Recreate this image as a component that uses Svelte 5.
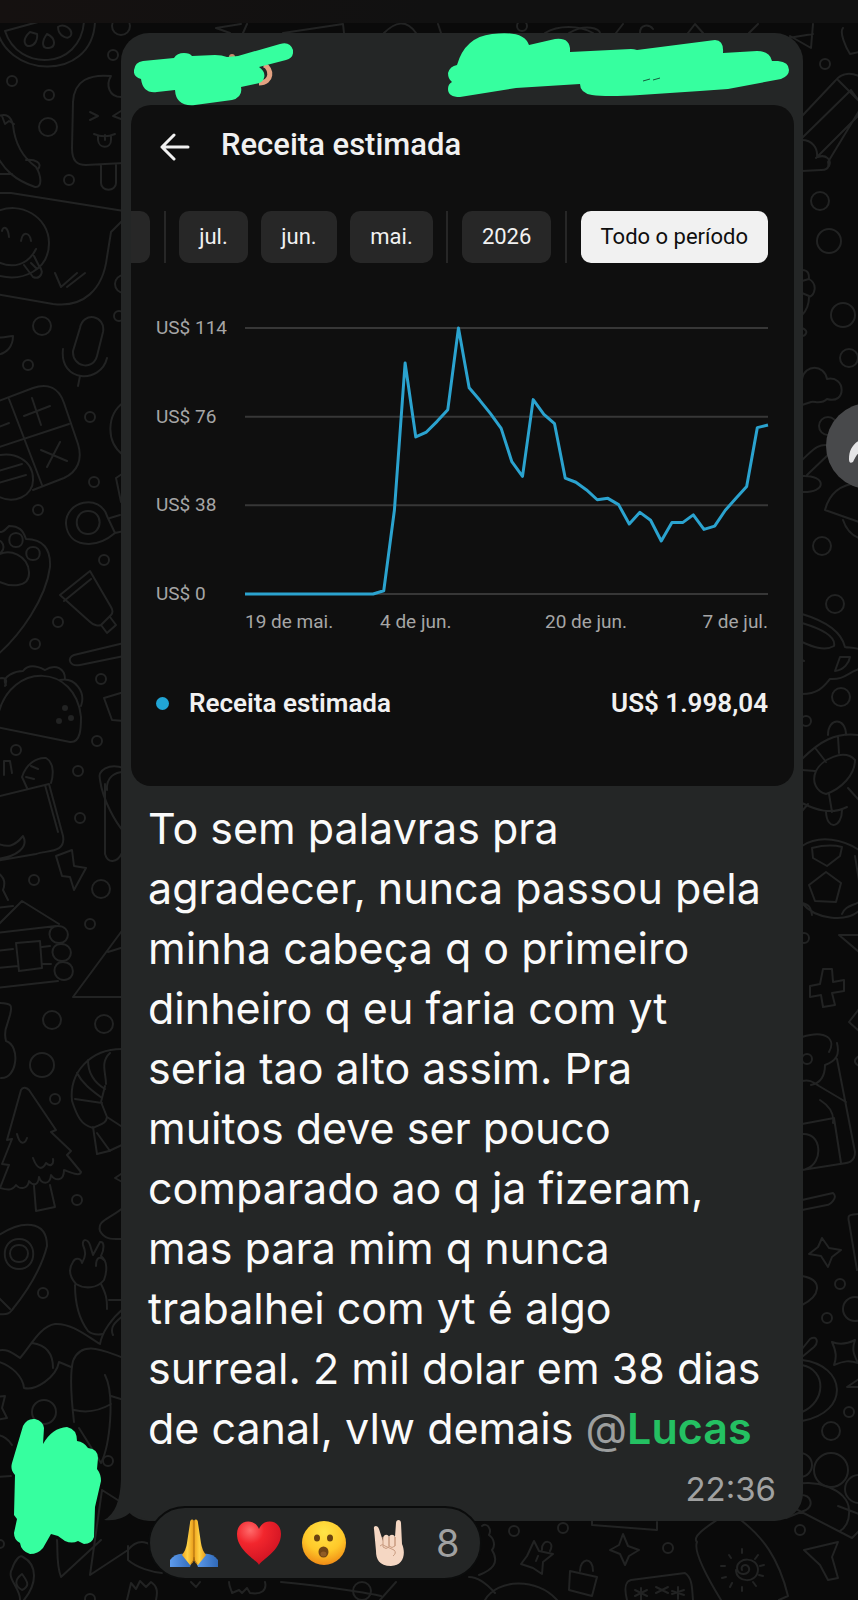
<script lang="ts">
  const periods = ['jul.', 'jun.', 'mai.'];
  let selected = $state('Todo o período');

  // daily revenue in US$, 19 May to 7 July
  const revenue = [
    0, 0, 0, 0, 0, 0, 0, 0, 0, 0, 0, 0, 0, 1.4, 36, 99, 67.3, 69.4, 74, 79,
    114, 88.4, 83, 77.3, 71, 56.7, 50.4, 83.3, 77, 73, 49.7, 47.9, 44.6, 40.4,
    41, 38.3, 30, 35, 31.6, 22.7, 30.6, 30.6, 33.9, 27.7, 29.1, 35.9, 41, 46.1,
    71.3, 72.4,
  ];
  const line = revenue.map((v, i) => `${i},${114 - v}`).join(' ');
  const yLabels = [114, 76, 38, 0];
  const xLabels = ['19 de mai.', '4 de jun.', '20 de jun.', '7 de jul.'];

  // wallpaper bubbles: x, y, radius
  const dots = [
    [121, 26, 9], [113, 55, 5], [12, 81, 5], [49, 95, 5], [48, 127, 9], [69, 180, 5],
    [42, 326, 9], [28, 365, 5], [90, 417, 5], [94, 482, 5], [119, 316, 5], [124, 284, 9],
    [38, 510, 5], [104, 560, 5], [58, 622, 5], [35, 644, 5], [101, 679, 5], [97, 741, 5],
    [16, 750, 5], [78, 771, 5], [80, 818, 5], [34, 880, 5], [101, 889, 9], [90, 924, 5],
    [52, 1020, 9], [104, 1024, 9], [42, 1065, 12], [55, 1099, 5], [77, 1200, 5],
    [43, 1293, 5], [44, 1412, 12], [108, 1461, 5], [0, 1544, 4], [90, 1599, 5],
    [522, 26, 5], [825, 64, 5], [820, 201, 9], [829, 241, 12], [843, 315, 12], [849, 358, 9],
    [828, 426, 9], [822, 546, 9], [835, 604, 9], [841, 697, 9], [806, 721, 5],
    [804, 938, 5], [807, 1059, 5], [840, 1284, 5], [827, 1318, 5], [855, 1309, 12],
    [849, 1412, 5], [831, 1431, 9], [800, 1465, 12], [831, 1470, 17], [859, 1489, 14],
    [800, 1530, 5], [514, 1531, 5], [563, 1528, 5], [668, 1548, 5], [362, 1591, 9],
  ];

  const doodles = [
    // watermelon
    'M-4 24C2 78 92 84 95 22M5 31C18 72 80 70 84 22M5 31 38 22M30 32c-9 8-5 15 0 14s8-6 7-12zM47 34c-6 8-5 15 2 14s7-10-2-14M58 27c0 9 11 14 13 8s-7-12-13-8',
    // ice lolly
    'M123 97C108 98 106 84 111 76 90 74 74 80 73 102L72 148c0 13 5 17 14 17l38-2M101 165v18c0 9 15 9 15 0v-18M90 112l8 4-8 4M121 111l-8 5 8 3M94 134c7 3 14 3 21 0M98 136v4c1 9 13 9 13 0v-4M105 135v5',
    // pepper
    'M-4 117c11-5 15 0 17 8C15 145 25 159 36 167c5 8 7 21-1 20C15 180 4 170-4 154M-4 174h16M26 160c9-1 17 3 12 9M2 116l3 8 4-3 5 3',
    // envelope with face
    'M-4 193h15L124 211M-4 294 53 304c30 4 50-14 54-47l4-25 13-13M2 231c1-5 6-5 7 6M21 241c2-11 9-8 10 0M55 273l6 14 16-14M67 287l18-14',
    'M-4 212C20 200 49 217 49 243S24 283-4 275M-2 262c15 7 30 3 38-13M24 265l9 12c7 3 12-5 6-11l-5-10M31 263l5 5',
    // microphone
    'M80 328c3-17 26-13 23 4l-6 24c-4 15-25 11-24-5zM63 349c-4 34 38 35 44 9M80 376l-2 10M-4 337c8 2 11-1 17-1 0 10-6 18-17 19',
    // calculator
    'M-4 402 33 388c15-5 26 0 31 15l14 41c5 16-1 28-14 34l-31 12M9 399l33 86M-4 448l73-24M24 416l26-10M32 398l9 27M41 450l26 11M60 442l-13 25M-4 428l13-5M-2 471l24-7M-2 483l28-8',
    'M-4 456c18-5 37 4 37 23 1 17-20 27-37 16M124 402c-18 13-18 40-1 53M122 474l-6 4 5 24',
    // paw
    'M-4 530c5 5 9 0 13-4 10 0 14 4 17 13 17 0 25 10 24 28C46 598 21 635-4 656M16 533c9 0 9 14 0 14s-9-14 0-14M33 547c9 0 9 13 0 13s-9-13 0-13M-4 556c14-9 32 0 33 16S10 588-4 580M-4 540c10 0 10 14 0 14',
    // whistle and tube
    'M115 533c-20 17-47 14-49-9-1-23 34-31 41-8zM88 511c16 0 15 23 0 23s-15-23 0-23M110 518l10-3M115 533l9-2M90 571l-30 24 29 26c5 5 10 5 12 4l10-10c3-3 1-6 0-8zM91 579l-27 22M101 625l6 8 9-8-6-8',
    'M124 643 74 655c-8 3-4 12 6 10l44-9',
    // taco
    'M-4 727 70 742c11 1 11-15 11-25C76 664 11 661-2 715M6 685c-6-9 11-14 17-14 7-9 18-3 22-1 11-7 20-1 20 9M60 680c15-3 26 12 21 26M-4 679l6-1c7 0 3 7 3 8M124 692l-20 6 8 22 12 1',
    // grocery bag
    'M-4 797 49 784l14 52c3 17-15 14-27 18l-40 7M45 785l13 47M27 788l-5-11c4-13 15-20 24-19 9 5 7 19 5 25M31 766l7 3M26 777l8 2M-4 843c12 5 18 4 27-7 6 11-6 21-27 23M4 775v-14h6l2 12',
    // surfboard and bolt
    'M124 768c-15-5-27 2-24 12 3 21 16 43 24 52M105 784v70c3 10 12 9 17-1M107 790c-1-13 8-18 17-18M56 856l16-6 2 16 12 2-12 22-4-13-8-1z',
    // log cabin
    'M-4 927 22 901 59 924M13 906-4 908M-4 933 56 926M-4 951l17-2M42 947l8-1M-4 968l22-2M42 964h9M-4 988l62-7M16 943l24-2 2 27-23 3zM58 926c13 0 13 17 1 17s-13-17-1-17M61 944c13 0 13 17 1 17s-13-17-1-17M63 962c13 0 13 18 1 18s-13-18-1-18M-4 872c8 4 10 10 7 18l5 10',
    'M124 928 73 997h52M108 952l16-5M-4 1003c18 0 16 3 14 12l-3 10c-3 7-2 12-1 16 15 5 11 38-5 37',
    // christmas tree
    'M21 1090c2-4 6-2 8 0L56 1130l-5 2 20 19-4 4 14 17c-1 5-11 0-17-2 0 12-9 11-13 5-1 11-10 9-12 2-1 9-6 9-10 4-1 8-9 9-13 4-4 6-9 5-16 3l9-23-7-1 10-25-5 1zM34 1186l2 25 19-4-5-22M17 1134c3 12 8 10 10 4M33 1158c4 11 9 13 13 5 4 4 8 2 7-4',
    // shrimp
    'M124 1049c-34-1-55 24-52 52 5 15 9 24 21 27 8-4 13-4 14-11l-6-15 4-16M88 1060c0 14 7 23 17 29M77 1073c5 10 14 17 25 25M75 1099l27 4M110 1053c-10 9-4 20-4 31M93 1127l4 27 12-3 15-7M107 1117l17 11M97 1133l13 18M124 1172l-9 6 9 5M124 1207c-14 12-27 13-24 24 5 9 12 8 24 8',
    // map pin
    'M-4 1237c26-18 51-17 51 9-5 20-18 43-35 64-4 6-9 3-16 5M-4 1295l14 14M19 1239c19 0 19 30 0 30s-19-30 0-30M19 1245c12 0 12 17 0 17s-12-17 0-17',
    // hand
    'M76 1284c-6-7-8-15-3-22 2-5 8-4 9 1 4-7 4-11 1-18-1-7 5-6 7 0l3 10 7-13c5-1 4 8 1 14 7 5 6 16 3 24-7 9-20 9-28 4M75 1285c0 19 4 34 13 46 5 4 10 4 15 3M101 1284c5 10 6 14 6 25M96 1266c0-9 4-10 8-6',
    'M-4 1351c11-3 15 1 24 7 10-11 20-32 35-34 17-1 33 13 45 20 2-12 12-26 24-36M-4 1361c16 4 27 16 28 27 11 3 32-10 35-26l12 5M32 1343c15 2 21 11 21 25M74 1422c-2-17-5-45-1-61 9-23 35-8 51-3M105 1375c10 20 5 70-4 88l-22-35M74 1410c12 3 25 1 37-6M111 1396l13 4M113 1335c-4-9 4-14 11-20M109 1300h15',
    'M-4 1397l9-1-3 12 5 10-11 2M-4 1435c7 0 13 5 16 10M-4 1477l15-1M102 1490 90 1575l38-25c12-15 24-5 32 0M102 1490l22 14M57 1540c1 10-1 24 4 37l40-37M128 1546v14c9 8 24 12 34 13M20 1600c1-11-14-22-8-31 3-9 8-15 11-12 15 8 14 27 1 43M22 1574c-8 6-7 12 0 16 8-4 6-8 0-16M127 1600l4-17 5 6 4-8 6 6 5-5c6 4 7 9 5 18',
    // shapes along the top
    'M216 28l14 5M216 28l25-4M247 24l-4 9M283 33l60-9 1 9M384 33c11-11 22-14 32 0M438 24l3 9M545 33c13-8 34-8 48 0M569 33c17-10 31-4 31 0M616 33l7-9M640 33c0-9 9-9 13-4M688 33l7-9 8 9M749 33l9-9M788 38l25-4M813 24l-2 24-21-12M843 28c-4 4 3 20 7 26l9-2',
    // pencil
    'M802 116 835 81c7-9 17-8 24-5M802 138l49-48 8 11M838 80l21 21M859 111l-31 51c2 7-3 8-7 8l-19 1M802 140c10 0 16 8 15 17M816 158l43-43M818 157c8-3 14 3 11 9M802 270c7 0 7 5 7 9 9 5 6 16 0 18 0 9-3 14-7 18M802 281l7-2M802 293l7 3M802 328c8 3 3 8 0 8',
    // cloud and shoes
    'M802 379c3-15 22-15 25 0 19-4 20 26 0 20-6 6-12 2-16 3l-9 3M802 460c10-9 16-18 29-14M807 475l24-23M802 476c25-1 25 17 0 16M825 510c5-19 18-26 34-27M825 510l34 12M843 520c3 9 8 15 16 18',
    // kettle
    'M802 614c20 6 39 16 43 33 3 1 7 0 14 2M802 623c20 6 34 14 32 23-10 6-23 0-32-4M802 694c17 0 22-8 28-15 14 1 17-6 29-10M840 657h10c-1 6-6 13-15 14zM802 660l2 1',
    // turtle
    'M802 759c17-17 33-27 57-24M802 770l13 1M816 749l10 13M838 737l1 16M848 788l11 12M829 794l3 18M802 803c14 7 29 12 45 4M816 771c5-11 28-23 39-11 0 15-14 29-29 34-9-2-15-12-10-23M828 735c0-18 18-18 18 0M826 812c1 19 16 16 16-2M802 811l6-7',
    // football
    'M802 846c18-12 42-6 57 4M802 903c13 16 43 20 57 8M812 848c12-3 22-3 30-1l-2 9-13 10-14-8zM826 872l15 11-5 19-21-1-6-16zM802 903c9 2 9 7 10 12M842 914c3-8 10-8 17-12M859 935h-20l20 17M855 856l4 25',
    // plus, cottage
    'M823 969h9l1 13 11-2v11l-12 2 3 12-12 2-2-12-11 2v-11l10-2zM859 1009l-10 13 10 9M802 1037c25-8 34 3 27 15M837 1043c3 12-1 18-12 22 0 10-4 18-14 20M802 1081c7-2 11 1 17 5l27 16M837 1059l18 93c0 11-8 11-15 12l-38 6M802 1124l32-6 7 45M820 1100c11 7 14 16 13 23M802 1134c20-2 22 29 4 35M859 1056c-8 5-2 9 0 10M802 1200l31-7c6 5-4 12-6 12l-25 5M859 1214c-9 1-12 0-10 8l8 48',
    // sparkles
    'M822 1238l7 10 12 2-9 7-4 10-7-11-12-2 9-7zM832 1342c8 3 15 2 23-2-3 9-2 13 3 23-9-3-14-2-24 2 3-8 2-14-2-23M802 1276c22 4 18 20 0 29M802 1349l8-10c7-4 9 3 4 8l-12 10M802 1365c25 5 24 37 0 47M802 1360c44 5 49 52 0 61M859 1379l-12 8h12',
    // corner shapes
    'M791 1486c21-9 58 3 58 24 1 11-4 18-9 21M790 1506l62 32 7-7M838 1506l21 8M791 1493c4-6 11-4 10 2 10 0 13 10 5 15l-20 8-4-24c2-6 8-6 9-1M804 1550l34-8-6 15 6 21-10 2-8-15zM592 1521v4l65 5v-8M697 1542c-7-7 20-21 28-28M697 1542c-4 9 10 35 24 58M738 1518c25 18 41 41 50 78l-9 4',
    'M623 1534l5 12 11 4-10 6-4 9-5-11-10-4 9-5zM534 1541l5 10 14 3-10 8-1 12-9-6-12-4 6-8zM542 1550c-1-12 14-10 8 1M536 1561l2-5M570 1571l27 6-5 19-23-6zM580 1571c0-13 13-15 13 0M627 1600c-4-16 0-19 4-20l54-7c8 5 7 18 8 27M635 1590l12 6M647 1590l-12 6M641 1588v12M656 1587l12 6M668 1587l-12 6M672 1591l12 4M684 1590l-12 4M678 1587v12',
    'M482 1526c5-4 10 3 7 9 6 4 6 12 3 15 8 13 0 20-13 25M469 1577c8 0 18 7 26 16M485 1600c12-21 52-23 72 0M281 1582c45 4 92 12 100 14M380 1600l16-18M229 1582c0 5 3 9 3 11l7-3 3 3 5-5 3 5c12 2 17-3 15-11M191 1582l5 5 4-5',
    // sun
    'M742 1570c-2-5 5-7 7-2 2 7-12 9-12 0 0-11 21-12 21 2-1 14-22 13-22 0M742 1549v4M758 1555l-3 4M764 1565l-4 1M763 1576l-4-1M756 1586l-3-4M742 1591v-4M730 1587l2-4M722 1578l4-1M721 1566h4M729 1555l2 3',
  ];
</script>

<main class="chat">
  <svg class="wallpaper" viewBox="0 0 858 1600" preserveAspectRatio="xMidYMin slice" aria-hidden="true">
    {#each dots as [cx, cy, r]}
      <circle {cx} {cy} {r} />
    {/each}
    {#each doodles as d}
      <path {d} />
    {/each}
    <g class="freckles">
      <circle cx="65" cy="708" r="3" />
      <circle cx="71" cy="718" r="3" />
      <circle cx="59" cy="721" r="3" />
    </g>
  </svg>

  <div class="topbar"></div>

  <article class="bubble">
    <header class="sender">
      <svg width="159" height="64" viewBox="134 43 159 64" aria-hidden="true">
        <path d="M264 65C272 68 273 83 259 83" fill="none" stroke="#e3a282" stroke-width="5" />
        <circle cx="232" cy="57" r="3" fill="#c98b6b" />
        <path class="marker" d="M143 61 174 58Q177 53 184 53 190 53 192 56L215 55Q222 55 227 57L238 56 280 44Q290 41 293 50 294 58 286 60L259 67Q266 72 264 78 263 83 255 84L241 87Q243 97 232 100L195 105Q176 107 175 90L157 92Q143 94 141 79 133 77 134 70 135 62 143 61Z" />
      </svg>
      <svg width="341" height="66" viewBox="448 33 341 66" aria-hidden="true">
        <path class="marker" d="M457 65Q465 37 492 34 524 30 529 45L555 39Q571 37 570 52L631 49Q634 49 637 50L715 40Q724 40 723 53L757 51Q770 51 772 61L778 61Q789 62 789 70 789 76 781 79L728 89 700 91 640 95Q606 97 592 95 580 93 580 84L516 88 460 97Q448 97 448 89 448 84 452 82 448 79 448 73 450 66 457 65Z" />
        <path d="M643 81l7-2M653 80l7-2" fill="none" stroke="#155c3b" />
      </svg>
    </header>

    <section class="card">
      <div class="card-head">
        <button class="back" aria-label="Voltar">
          <svg width="32" height="28" viewBox="0 0 32 28" fill="none" stroke="#f1f1f1" stroke-width="3" stroke-linecap="round" stroke-linejoin="round">
            <path d="M29 14H3M15 2 3 14l12 12" />
          </svg>
        </button>
        <h1>Receita estimada</h1>
      </div>

      <div class="chips">
        <button class="chip cut" aria-label="ago."></button>
        <span class="divider"></span>
        {#each periods as period}
          <button class="chip" class:active={selected === period} onclick={() => (selected = period)}>{period}</button>
        {/each}
        <span class="divider"></span>
        <button class="chip" class:active={selected === '2026'} onclick={() => (selected = '2026')}>2026</button>
        <span class="divider"></span>
        <button class="chip" class:active={selected === 'Todo o período'} onclick={() => (selected = 'Todo o período')}>Todo o período</button>
      </div>

      <div class="chart">
        <div class="y-axis">
          {#each yLabels as label}
            <span>US$ {label}</span>
          {/each}
        </div>
        <div class="plot">
          <svg viewBox="0 0 49 114" preserveAspectRatio="none" role="img" aria-label="Receita estimada por dia">
            {#each yLabels as label}
              <path class="grid" d="M0 {114 - label}H49" />
            {/each}
            <polyline points={line} />
          </svg>
          <div class="x-axis">
            {#each xLabels as label}
              <span>{label}</span>
            {/each}
          </div>
        </div>
      </div>

      <div class="total">
        <span class="dot"></span>
        <span>Receita estimada</span>
        <span class="amount">US$ 1.998,04</span>
      </div>
    </section>

    <p class="message">
      To sem palavras pra<br />
      agradecer, nunca passou pela<br />
      minha cabeça q o primeiro<br />
      dinheiro q eu faria com yt<br />
      seria tao alto assim. Pra<br />
      muitos deve ser pouco<br />
      comparado ao q ja fizeram,<br />
      mas para mim q nunca<br />
      trabalhei com yt é algo<br />
      surreal. 2 mil dolar em 38 dias<br />
      de canal, vlw demais <a href="#lucas"><span class="at">@</span>Lucas</a>
    </p>
    <time>22:36</time>

    <svg class="tail" width="50" height="42" viewBox="0 0 50 42" aria-hidden="true">
      <path d="M17 0Q16 33 0 41 16 43 27 33 36 40 50 42V0Z" fill="#242626" />
    </svg>

    <svg class="avatar" width="91" height="136" viewBox="11 1418 91 136" aria-hidden="true">
      <path class="marker" d="M23 1426Q27 1418 35 1419 43 1421 44 1428L43 1444Q52 1428 67 1427 77 1429 77 1441 84 1442 88 1448 98 1449 98 1458L97 1469Q101 1474 101 1481L95 1507 94 1537Q92 1544 84 1544L78 1541Q72 1544 65 1541L58 1536 51 1534 43 1548Q38 1554 30 1554 21 1551 20 1543 14 1540 14 1533L17 1519 14 1515 15 1475Q10 1470 12 1463Z" />
    </svg>

    <button class="reactions" aria-label="8 reações">
      <svg viewBox="0 0 48 48">
        <defs>
          <linearGradient id="hands" x1="0" x2="1">
            <stop offset="0" stop-color="#f0a41c" />
            <stop offset=".45" stop-color="#ffd246" />
            <stop offset="1" stop-color="#e89a17" />
          </linearGradient>
          <linearGradient id="sleeve" x1="0" x2="1">
            <stop offset="0" stop-color="#5d9bec" />
            <stop offset="1" stop-color="#3069b8" />
          </linearGradient>
        </defs>
        <path d="M0 48V41C4 36 9 34 14 35L22 43 20 48Z" fill="url(#sleeve)" />
        <path d="M48 48V41C44 36 39 34 34 35L26 43 28 48Z" fill="url(#sleeve)" />
        <path d="M24 2C22-1 20 1 20 4L17 24Q16 31 12 36L20 46Q24 44 24 38Z" fill="url(#hands)" />
        <path d="M24 2C26-1 28 1 28 4L31 24Q32 31 36 36L28 46Q24 44 24 38Z" fill="url(#hands)" />
        <path d="M24 2v36q0 4-3 7M24 38q0 4 3 7" fill="none" stroke="#a86a10" />
      </svg>
      <svg viewBox="-2 0 48 48">
        <defs>
          <radialGradient id="heart" cx=".3" cy=".2" r=".9">
            <stop offset="0" stop-color="#ff6b6b" />
            <stop offset=".35" stop-color="#f2262d" />
            <stop offset="1" stop-color="#c90f20" />
          </radialGradient>
        </defs>
        <path d="M22 46C20 41 0 32 0 15 0 0 18-1 22 10 26-1 44 0 44 15 44 32 24 41 22 46Z" fill="url(#heart)" />
      </svg>
      <svg viewBox="-2 0 48 48">
        <defs>
          <radialGradient id="face" cx=".5" cy=".25" r=".75">
            <stop offset="0" stop-color="#ffe447" />
            <stop offset=".6" stop-color="#ffc829" />
            <stop offset="1" stop-color="#f08c16" />
          </radialGradient>
        </defs>
        <circle cx="22" cy="24" r="22" fill="url(#face)" />
        <ellipse cx="15" cy="19" rx="3" ry="3.5" fill="#6b4310" />
        <ellipse cx="28" cy="19" rx="3" ry="3.5" fill="#6b4310" />
        <ellipse cx="21.500" cy="33" rx="5" ry="5.500" fill="#714515" />
        <ellipse cx="21.500" cy="35" rx="3" ry="2.500" fill="#915c25" />
      </svg>
      <svg viewBox="-8 0 48 48">
        <path d="M1 10C0 6 5 6 6 10L10 22V19C11 15 15 15 16 18 17 15 21 15 22 18L23 4C23 0 28 0 28 4L29 25C33 34 31 47 18 47 6 47 3 40 3 32Z" fill="#f5d7c3" />
        <path d="M10 18v10q3 3 6 0V18M16 18v9q3 3 6 0v-9M22 18v9M7 27q2-3 5 0l9 4q3 3-1 6" fill="none" stroke="#c99b80" stroke-width="1" />
      </svg>
      <span>8</span>
    </button>
  </article>

  <button class="forward" aria-label="Encaminhar">
    <svg width="44" height="36" viewBox="0 0 44 36">
      <path d="M6 34C3 36 2 34 2 31 2 20 8 12 22 9V1L43 17 22 33V22C13 22 10 25 6 34Z" fill="#e4e4e6" />
    </svg>
  </button>
</main>

<style>
  :global(body) {
    margin: 0;
    background: #0a0a0a;
  }

  .chat {
    position: relative;
    min-height: 100vh;
    box-sizing: border-box;
    padding-bottom: 78px;
    overflow: hidden;
    background: #0a0a0a;
    color: #fafafa;
    font-family: Inter, 'Liberation Sans', sans-serif;
  }

  .wallpaper {
    position: absolute;
    inset: 0;
    width: 100%;
    height: 100%;
    fill: none;
    stroke: #222323;
    stroke-width: 2;
    stroke-linejoin: round;
    stroke-linecap: round;
  }

  .freckles {
    fill: #222323;
    stroke: none;
  }

  .topbar {
    position: relative;
    height: 23px;
    background: linear-gradient(90deg, #151110, #111 50%);
  }

  .bubble {
    position: relative;
    margin: 10px 55px 0 121px;
    padding: 0 9px 12px 10px;
    border-radius: 28px;
    background: #242626;
  }

  .sender {
    display: flex;
    justify-content: space-between;
    align-items: flex-start;
    height: 72px;
    padding: 0 5px 0 3px;
  }

  .sender svg:first-child {
    margin-top: 10px;
    position: relative;
    z-index: 1;
  }

  .marker {
    fill: #36ff9f;
  }

  button {
    border: none;
    padding: 0;
    font-family: inherit;
    cursor: pointer;
  }

  .card {
    padding-bottom: 67px;
    border-radius: 20px;
    overflow: hidden;
    background: #0f0f0f;
    color: #f1f1f1;
    font-family: Roboto, Inter, sans-serif;
  }

  .card-head {
    display: flex;
    align-items: center;
    gap: 30px;
    padding: 20px 28px 0;
    height: 40px;
  }

  .back {
    display: flex;
    background: none;
    margin-top: 4px;
  }

  h1 {
    margin: 0;
    font-size: 31px;
    font-weight: 500;
    line-height: 40px;
  }

  .chips {
    display: flex;
    align-items: center;
    justify-content: space-between;
    margin: 46px 26px 0 0;
  }

  .chip {
    height: 52px;
    padding: 0 20px 2px;
    border-radius: 10px;
    background: #272727;
    color: #f1f1f1;
    font-size: 22px;
  }

  .chip.cut {
    width: 19px;
    padding: 0;
    border-radius: 0 10px 10px 0;
  }

  .chip.active {
    background: #f1f1f1;
    color: #0f0f0f;
  }

  .divider {
    width: 2px;
    height: 52px;
    background: #272727;
  }

  .chart {
    display: flex;
    margin: 52px 26px 0 25px;
    color: #a6a6a6;
    font-size: 19px;
    line-height: 26px;
  }

  .y-axis {
    display: flex;
    flex-direction: column;
    justify-content: space-between;
    width: 89px;
    height: 292px;
  }

  .plot {
    flex: 1;
    padding-top: 13px;
  }

  .plot svg {
    display: block;
    width: 100%;
    height: 266px;
    overflow: visible;
    fill: none;
  }

  .grid,
  polyline {
    vector-effect: non-scaling-stroke;
  }

  .grid {
    stroke: #373737;
    stroke-width: 2;
  }

  polyline {
    stroke: #2ba3cf;
    stroke-width: 3;
    stroke-linejoin: round;
  }

  .x-axis {
    display: grid;
    grid-template-columns: 135px 165px 1fr auto;
    margin-top: 15px;
    white-space: nowrap;
  }

  .total {
    display: flex;
    align-items: center;
    margin: 52px 26px 0 25px;
    font-size: 26px;
    font-weight: 600;
    line-height: 32px;
  }

  .dot {
    width: 13px;
    height: 13px;
    margin-right: 20px;
    border-radius: 50%;
    background: #21a5d5;
  }

  .amount {
    margin-left: auto;
  }

  .message {
    margin: 12px 0 0 17px;
    font-size: 43px;
    line-height: 60px;
    white-space: nowrap;
  }

  .message a {
    color: #24c062;
    font-weight: 600;
    text-decoration: none;
  }

  .message .at {
    color: #9c9e9e;
    font-weight: 400;
  }

  time {
    display: block;
    margin: 11px 18px 0 0;
    text-align: right;
    color: #a0a1a1;
    font-size: 33px;
    line-height: 40px;
  }

  .tail {
    position: absolute;
    left: -17px;
    bottom: 0;
  }

  .avatar {
    position: absolute;
    left: -110px;
    bottom: -33px;
  }

  .reactions {
    position: absolute;
    left: 27px;
    bottom: -59px;
    display: flex;
    align-items: center;
    gap: 17px;
    height: 74px;
    padding: 0 20px;
    border: 2px solid #0b0c0c;
    border-radius: 37px;
    background: #242626;
    color: #a0a1a1;
    font-size: 38px;
  }

  .reactions svg {
    width: 48px;
    height: 48px;
  }

  .reactions span {
    margin-left: 6px;
  }

  .forward {
    position: absolute;
    top: 403px;
    right: -54px;
    display: flex;
    align-items: center;
    width: 86px;
    height: 86px;
    padding-left: 21px;
    border-radius: 50%;
    background: #48494b;
  }
</style>
